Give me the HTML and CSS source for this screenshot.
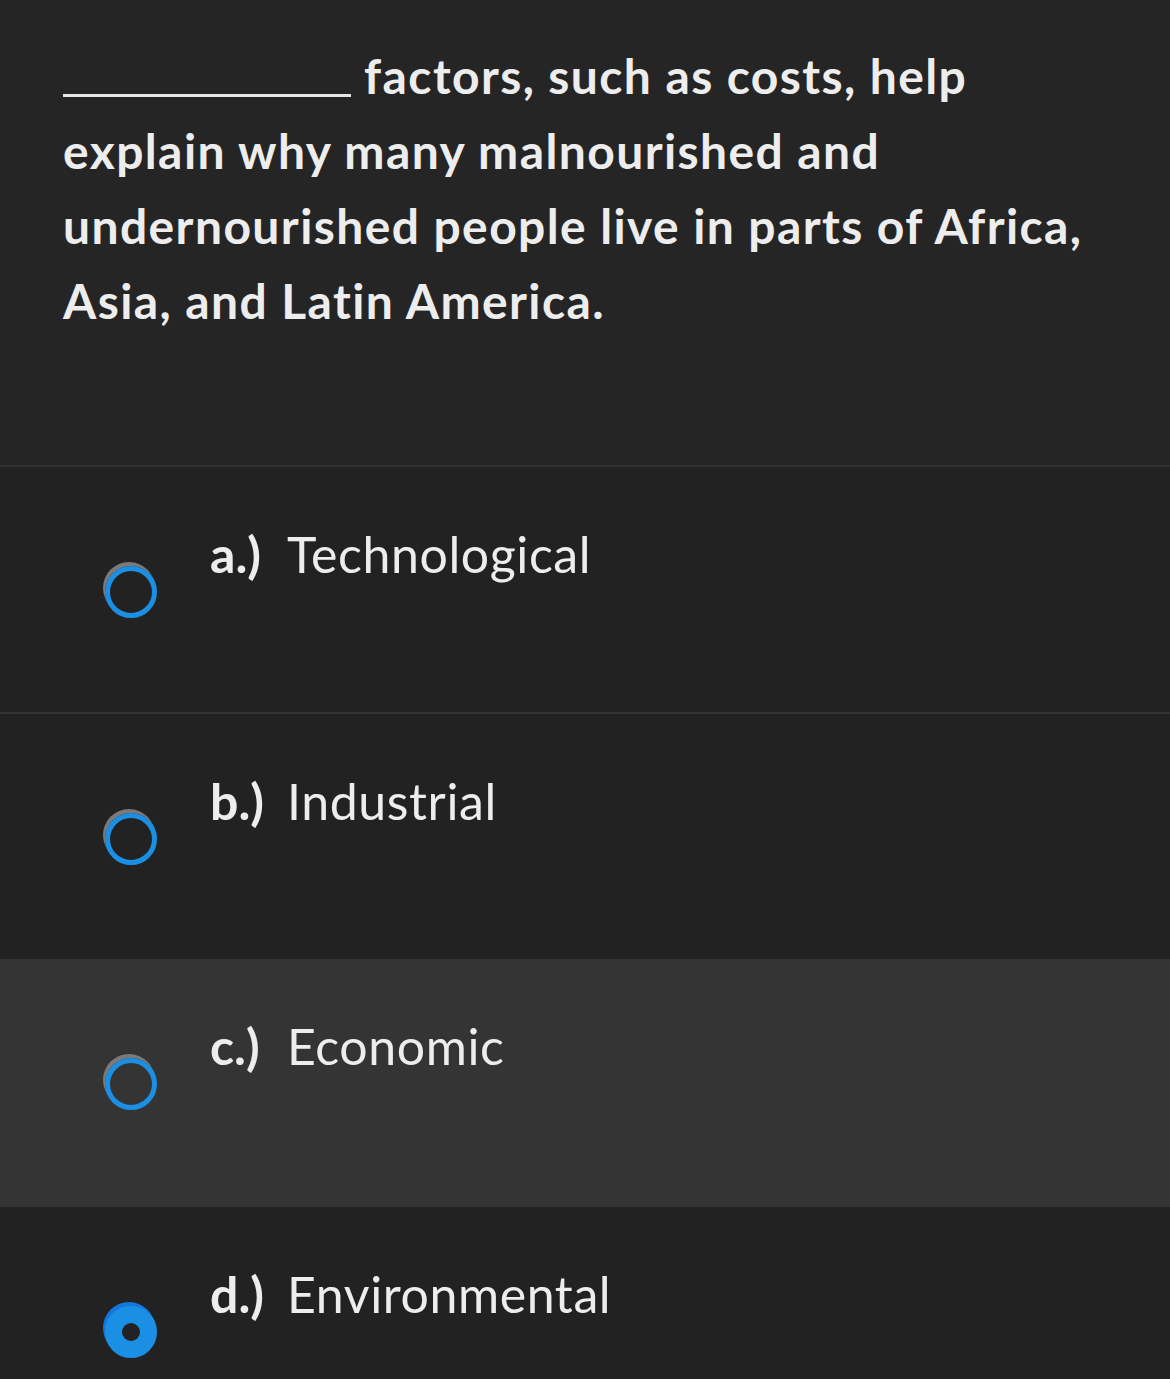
FILE: index.html
```html
<!DOCTYPE html>
<html>
<head>
<meta charset="utf-8">
<link rel="stylesheet" href="styles.css">
</head>
<body>
<div class="page">
  <div class="question">
    <p><span class="blank"></span> factors, such as costs, help explain why many malnourished and undernourished people live in parts of Africa, Asia, and Latin America.</p>
  </div>
  <div class="option sep">
    <span class="radio"></span>
    <span class="letter">a.)</span>
    <span class="text">Technological</span>
  </div>
  <div class="option">
    <span class="radio"></span>
    <span class="letter">b.)</span>
    <span class="text">Industrial</span>
  </div>
  <div class="option hover">
    <span class="radio"></span>
    <span class="letter">c.)</span>
    <span class="text">Economic</span>
  </div>
  <div class="option">
    <span class="radio checked"></span>
    <span class="letter">d.)</span>
    <span class="text">Environmental</span>
  </div>
</div>
</body>
</html>
```
FILE: styles.css
```css
html, body {
  margin: 0;
  padding: 0;
  background: #222222;
}
.page {
  width: 1170px;
  height: 1379px;
  overflow: hidden;
  font-family: Lato, "Open Sans", sans-serif;
  color: #ededed;
}
.question {
  background: #252525;
  height: 467px;
  box-sizing: border-box;
  padding: 38px 60px 0 63px;
  border-bottom: 2px solid #333333;
}
.question p {
  margin: 0;
  font-size: 48px;
  font-weight: 700;
  line-height: 75px;
  letter-spacing: 1.4px;
}
.blank {
  display: inline-block;
  width: 288px;
  height: 3px;
  background: #e6e6e6;
  vertical-align: -3px;
  margin-right: 0;
}
.option {
  height: 245px;
  box-sizing: border-box;
  display: flex;
  align-items: flex-start;
  padding-top: 57px;
  background: #222222;
}
.option.sep {
  border-bottom: 2px solid #333333;
  height: 247px;
}
.option.hover {
  background: #343434;
  height: 248px;
}
.radio {
  position: relative;
  width: 52px;
  height: 52px;
  box-sizing: border-box;
  border: 5px solid #1a8fe3;
  border-radius: 50%;
  margin-left: 105px;
  margin-right: 53px;
  margin-top: 42px;
  box-shadow: -2px -4px 0 0 #7a7a7a;
  flex: none;
}
.radio.checked {
  background: #1a8fe3;
  box-shadow: -2px -4px 0 0 #1477e0;
}
.radio.checked::after {
  content: "";
  position: absolute;
  left: 50%;
  top: 50%;
  width: 18px;
  height: 18px;
  margin: -9px 0 0 -9px;
  border-radius: 50%;
  background: #222222;
}
.letter {
  font-size: 50px;
  font-weight: 700;
  line-height: 60px;
  width: 77px;
  flex: none;
}
.text {
  font-size: 50px;
  font-weight: 400;
  line-height: 60px;
  letter-spacing: 0.6px;
}
```
